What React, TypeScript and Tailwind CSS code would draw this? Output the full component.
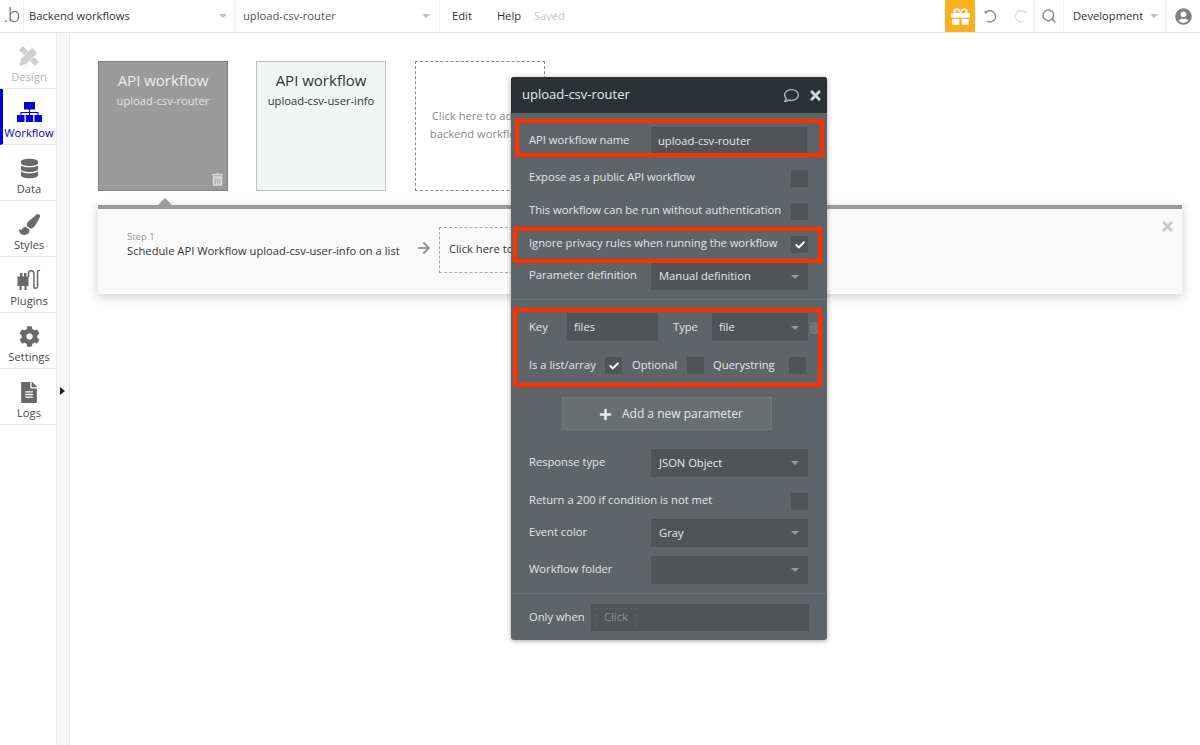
import React from 'react';
import { Search } from 'lucide-react';
import { FaArrowRight, FaCheck, FaCog, FaDatabase, FaFileAlt, FaGift, FaPaintBrush, FaPlus, FaRegComment, FaTimes, FaTrashAlt, FaUserCircle } from 'react-icons/fa';

function Caret({ className = 'border-t-[#b6c2cd]' }: { className?: string }) {
  return <span className={`w-0 h-0 border-x-[4px] border-x-transparent border-t-[4px] ${className}`} />;
}

function DesignIcon() {
  return (
    <svg viewBox="0 0 22 22" className="w-[22px] h-[22px]" fill="#cfcfcf">
      <path d="M1 5 L5 1 L21 17 L17 21 Z" />
      <path d="M14 2.5 L19.5 8 L8 19.5 L2.5 21 L1 20 L2.5 14 Z" stroke="#fff" strokeWidth="0.8" />
    </svg>
  );
}

function WorkflowIcon() {
  return (
    <svg viewBox="0 0 25 20" className="w-[25px] h-[20px]" fill="#0000d8">
      <rect x="7" y="0" width="11" height="7.5" />
      <rect x="0" y="13" width="7.5" height="7" />
      <rect x="8.75" y="13" width="7.5" height="7" />
      <rect x="17.5" y="13" width="7.5" height="7" />
      <path d="M12 7 h1 v3 h8.5 v3 h-1 v-2 h-7.5 v2 h-1 v-2 h-7.5 v2 h-1 v-3 h8.5 Z" />
    </svg>
  );
}

function PlugIcon() {
  return (
    <svg viewBox="0 0 24 22" className="w-[24px] h-[22px]" fill="none">
      <path d="M0.5 7.5 L3 7.5 L3 4 L5.5 4 L5.5 7.5 L7 7.5 L7 4 L9.5 4 L9.5 7.5 L11.5 7.5 L11.5 17 L9.5 17 L9.5 21 L7.5 21 L7.5 17 L4.5 17 L4.5 21 L2.5 21 L2.5 17 L0.5 17 Z" fill="#696969" />
      <path d="M11.5 8 V4.5 a2.7 2.7 0 0 1 5.4 0 V17.5 a1.8 1.8 0 0 0 3.6 0 V3 a1.5 1.5 0 0 1 2.5 -1.2" stroke="#696969" strokeWidth="1.5" />
    </svg>
  );
}

function SideItem({ label, icon, active, labelClass = 'text-[#4a4a4a]' }: { label: string; icon: React.ReactNode; active?: boolean; labelClass?: string }) {
  return (
    <div className={`h-[56px] border-b border-[#e8e8e8] flex flex-col items-center pt-[11px] ${active ? 'border-l-[3px] border-l-[#0000d8] pr-[1px]' : 'pl-[2px]'}`}>
      <div className="h-[24px] flex items-center justify-center">{icon}</div>
      <div className={`text-[11.2px] leading-[16px] mt-[1px] ${labelClass}`}>{label}</div>
    </div>
  );
}

function Check({ on }: { on?: boolean }) {
  return (
    <span className="w-[17px] h-[17px] bg-[#505457] flex items-center justify-center shrink-0">
      {on && <FaCheck className="text-white w-[10px] h-[10px]" />}
    </span>
  );
}

function Select({ value, className = 'w-[157px] h-[27px] pl-[8px]' }: { value?: string; className?: string }) {
  return (
    <div className={`bg-[#505457] flex items-center justify-between pr-[9px] text-[#e6e7e8] ${className}`}>
      <span>{value}</span>
      <Caret className="border-t-[#96999c]" />
    </div>
  );
}

function CheckRow({ label, on, className = '' }: { label: string; on?: boolean; className?: string }) {
  return (
    <div className={`flex items-center justify-between pl-[18px] pr-[19px] h-[17px] ${className}`}>
      <span className="-mt-[2px]">{label}</span>
      <Check on={on} />
    </div>
  );
}

function FieldRow({ label, value, tall, className = '' }: { label: string; value?: string; tall?: boolean; className?: string }) {
  return (
    <div className={`flex items-center justify-between pl-[18px] pr-[19px] ${className}`}>
      <span className={tall ? '-mt-[1px]' : '-mt-[2px]'}>{label}</span>
      <Select value={value} className={tall ? 'w-[157px] h-[28px] pl-[8px]' : 'w-[157px] h-[27px] pl-[8px]'} />
    </div>
  );
}

function Popup() {
  return (
    <div className="absolute left-[511px] top-[77px] w-[316px] h-[563px] bg-[#5f6468] rounded-[3px] shadow-[0_1px_5px_rgba(0,0,0,0.35)] text-[11.2px] text-[#e2e4e5] z-20">
      <div className="h-[36px] bg-[#2b3235] rounded-t-[3px] flex items-center justify-between pl-[11px] pr-[4px] text-[13px] text-[#e8eaea]">
        <span>upload-csv-router</span>
        <span className="flex items-center gap-[8px]">
          <FaRegComment className="w-[17px] h-[15px] text-[#aeb2b4]" />
          <FaTimes className="w-[15px] h-[15px] text-[#d5d7d8]" />
        </span>
      </div>

      <div className="flex items-center justify-between pl-[18px] pr-[20px] mt-[14px]">
        <span>API workflow name</span>
        <div className="w-[156px] h-[26px] bg-[#505457] flex items-center pl-[7px] pt-[2px] text-[#e6e7e8]">upload-csv-router</div>
      </div>

      <CheckRow label="Expose as a public API workflow" className="mt-[17px]" />
      <CheckRow label="This workflow can be run without authentication" className="mt-[16px]" />
      <CheckRow label="Ignore privacy rules when running the workflow" on className="mt-[16px]" />
      <FieldRow label="Parameter definition" value="Manual definition" className="mt-[10px]" />

      <div className="border-t border-[#6b7074] mt-[9px]" />

      <div className="flex items-center pl-[18px] pr-[19px] mt-[13px]">
        <span className="w-[38px]">Key</span>
        <div className="w-[91px] h-[28px] bg-[#505457] flex items-center pl-[7px] pt-[1px] text-[#e6e7e8]">files</div>
        <span className="ml-[15px] w-[39px]">Type</span>
        <Select value="file" className="w-[96px] h-[28px] pl-[7px] pt-[1px]" />
        <FaTrashAlt className="absolute left-[298px] top-[245px] w-[10px] h-[12px] text-[#777b7e]" />
      </div>

      <div className="flex items-center pl-[18px] mt-[16px] h-[17px]">
        <span className="w-[76px] -mt-[1px]">Is a list/array</span>
        <Check on />
        <span className="ml-[10px] w-[55px] -mt-[1px]">Optional</span>
        <Check />
        <span className="ml-[9px] w-[76px] -mt-[1px]">Querystring</span>
        <Check />
      </div>

      <div className="w-[210px] h-[33px] ml-[51px] mt-[23px] pl-[8px] pt-[1px] bg-[#696e71] border border-[#72777a] flex items-center justify-center gap-[10px] text-[12px] text-[#e6e7e8]">
        <FaPlus className="w-[13px] h-[13px] text-[#eceded]" />
        <span>Add a new parameter</span>
      </div>

      <FieldRow label="Response type" value="JSON Object" tall className="mt-[19px]" />
      <CheckRow label="Return a 200 if condition is not met" className="mt-[16px]" />
      <FieldRow label="Event color" value="Gray" tall className="mt-[9px]" />
      <FieldRow label="Workflow folder" tall className="mt-[9px]" />

      <div className="border-t border-[#6b7074] mt-[9px]" />

      <div className="flex items-center pl-[18px] mt-[10px]">
        <span className="w-[62px]">Only when</span>
        <div className="w-[218px] h-[27px] bg-[#505457] flex items-center pl-[4px]">
          <span className="border border-dashed border-[#5a5e61] px-[8px] h-[19px] flex items-center text-[#8b8f92]">Click</span>
        </div>
      </div>

      {/* red annotations drawn on the screenshot */}
      <div className="absolute left-[4px] top-[42px] w-[309px] h-[38px] border-[4px] border-[#ff2f00]" />
      <div className="absolute left-[2px] top-[150px] w-[309px] h-[36px] border-[4px] border-[#ff2f00]" />
      <div className="absolute left-[2px] top-[231px] w-[309px] h-[79px] border-[4px] border-[#ff2f00]" />
    </div>
  );
}

export default function App() {
  return (
    <div className="relative w-[1200px] h-[745px] overflow-hidden bg-white flex flex-col font-['Open_Sans',sans-serif] text-[#3a3a3a]">
      <header className="h-[33px] shrink-0 border-b border-[#e4e4e4] flex items-stretch text-[11.2px]">
        <div className="w-[24px] border-r border-[#eeeeee] flex items-center justify-center text-[21px] leading-none font-light tracking-tight text-[#666] pb-[3px]">.b</div>
        <div className="w-[212px] border-r border-[#eeeeee] flex items-center justify-between pl-[5px] pr-[8px] text-[#333]">
          <span>Backend workflows</span>
          <Caret />
        </div>
        <div className="w-[204px] border-r border-[#eeeeee] flex items-center justify-between pl-[7px] pr-[9px] text-[#555]">
          <span>upload-csv-router</span>
          <Caret />
        </div>
        <div className="w-[505px] flex items-center text-[#333]">
          <span className="ml-[12px]">Edit</span>
          <span className="ml-[25px]">Help</span>
          <span className="ml-[13px] text-[#c4c4c4] text-[11px]">Saved</span>
        </div>
        <div className="w-[30px] bg-[#fdb01f] flex items-center justify-center">
          <FaGift className="w-[19px] h-[19px] text-white" />
        </div>
        <div className="w-[60px] border-r border-[#eeeeee] flex items-center gap-[15px] pl-[8px]">
          <svg viewBox="0 0 20 20" className="w-[15px] h-[15px]" fill="none" stroke="#8a8a8a" strokeWidth="1.8">
            <path d="M3.5 5 A7.5 7.5 0 1 1 5 16" />
            <path d="M1.5 2.5 L7 2.5 L3.5 7 Z" fill="#8a8a8a" stroke="none" />
          </svg>
          <svg viewBox="0 0 20 20" className="w-[15px] h-[15px]" fill="none" stroke="#dddddd" strokeWidth="1.8">
            <path d="M16.5 5 A7.5 7.5 0 1 0 15 16" />
            <path d="M18.5 2.5 L13 2.5 L16.5 7 Z" fill="#dddddd" stroke="none" />
          </svg>
        </div>
        <div className="w-[29px] border-r border-[#eeeeee] flex items-center justify-center">
          <Search className="w-[16px] h-[16px] text-[#8a8a8a]" strokeWidth={2.2} />
        </div>
        <div className="w-[102px] border-r border-[#eeeeee] flex items-center justify-between pl-[9px] pr-[7px] text-[#333]">
          <span>Development</span>
          <Caret />
        </div>
        <div className="flex-1 flex items-center justify-center">
          <FaUserCircle className="w-[17px] h-[17px] text-[#808080]" />
        </div>
      </header>

      <div className="flex-1 flex min-h-0">
        <aside className="w-[57px] shrink-0 border-r border-[#e8e8e8] bg-white">
          <SideItem label="Design" labelClass="text-[#b5b5b5]" icon={<DesignIcon />} />
          <SideItem label="Workflow" active labelClass="text-[#0000d8]" icon={<WorkflowIcon />} />
          <SideItem label="Data" icon={<FaDatabase className="w-[17px] h-[21px] text-[#696969]" />} />
          <SideItem label="Styles" icon={<FaPaintBrush className="w-[21px] h-[21px] text-[#696969]" />} />
          <SideItem label="Plugins" icon={<PlugIcon />} />
          <SideItem label="Settings" icon={<FaCog className="w-[21px] h-[21px] text-[#696969]" />} />
          <SideItem label="Logs" icon={<FaFileAlt className="w-[16px] h-[21px] text-[#696969]" />} />
        </aside>
        <div className="w-[13px] shrink-0 bg-[#f7f7f7] border-r border-[#e4e4e4] relative">
          <span className="absolute left-[3px] top-[354px] w-0 h-0 border-y-[4px] border-y-transparent border-l-[5px] border-l-[#222]" />
        </div>

        <main className="relative flex-1 px-[28px] pt-[28px] bg-white">
          <div className="flex text-center">
            <div className="relative w-[130px] h-[130px] bg-[#9b9b9b] border border-[#7f7f7f] pt-[7px] text-[#eeeeee]">
              <div className="text-[15px] leading-[22px]">API workflow</div>
              <div className="text-[11.2px] leading-[18px] mt-[1px] text-[#e2e2e2]">upload-csv-router</div>
              <FaTrashAlt className="absolute right-[4px] bottom-[4px] w-[11px] h-[13px] text-[#d8d8d8]" />
            </div>
            <div className="w-[130px] h-[130px] ml-[28px] bg-[#f1f5f4] border border-[#b9c6c4] pt-[7px] text-[#333]">
              <div className="text-[15px] leading-[22px]">API workflow</div>
              <div className="text-[11.2px] leading-[18px] mt-[1px]">upload-csv-user-info</div>
            </div>
            <div className="w-[130px] h-[130px] ml-[29px] pb-[2px] border border-dashed border-[#888] flex items-center justify-center text-[11.2px] leading-[18px] text-[#8a8a8a]">
              <div>Click here to add a<br />backend workflows</div>
            </div>
          </div>

          <div className="relative w-[1084px] h-[89px] mt-[14px] bg-[#fafafa] border-t-[4px] border-[#9b9b9b] shadow-[0_3px_10px_rgba(0,0,0,0.2)] flex items-start pl-[29px]">
            <span className="absolute left-[60px] -top-[11px] w-0 h-0 border-x-[7px] border-x-transparent border-b-[7px] border-b-[#9b9b9b]" />
            <div className="w-[290px] mt-[22px]">
              <div className="text-[9.5px] leading-[12px] text-[#999]">Step 1</div>
              <div className="text-[11.2px] leading-[15px] text-[#333]">Schedule API Workflow upload-csv-user-info on a list</div>
            </div>
            <FaArrowRight className="w-[14px] h-[14px] mt-[32px] text-[#999]" />
            <div className="w-[130px] h-[46px] ml-[8px] mt-[18px] pb-[2px] border border-dashed border-[#aaa] flex items-center pl-[9px] text-[11.2px] text-[#333]">Click here to add</div>
            <FaTimes className="absolute right-[7px] top-[10px] w-[15px] h-[15px] text-[#c8c8c8]" />
          </div>
        </main>
      </div>

      <Popup />
    </div>
  );
}
